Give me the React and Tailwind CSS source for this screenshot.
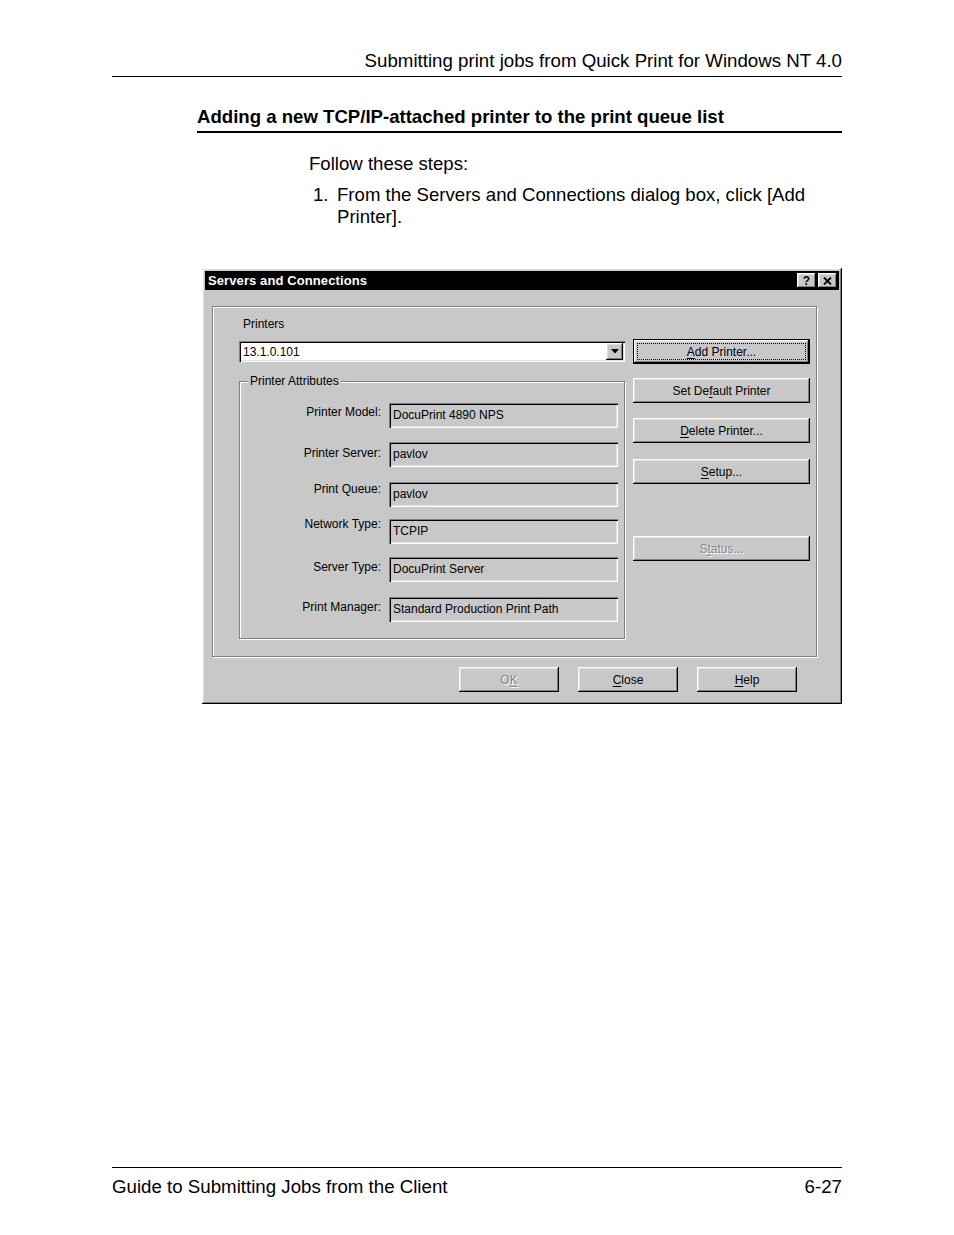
const raised =
  "shadow-[inset_-1px_-1px_0_#000,inset_1px_1px_0_#fff,inset_-2px_-2px_0_#808080,inset_2px_2px_0_#dfdfdf]";
const sunken =
  "shadow-[inset_1px_1px_0_#808080,inset_2px_2px_0_#000,inset_-1px_-1px_0_#fff,inset_-2px_-2px_0_#dfdfdf]";
const etched = "border border-[#808080] shadow-[1px_1px_0_#fff,inset_1px_1px_0_#fff]";
const disabledText = "text-[#868686] [text-shadow:1px_1px_0_#fff]";

const rows = [
  { label: "Printer Model:", value: "DocuPrint 4890 NPS", mt: "mt-[21px]", lt: "pt-[2px]" },
  { label: "Printer Server:", value: "pavlov", mt: "mt-[14px]", lt: "pt-[4px]" },
  { label: "Print Queue:", value: "pavlov", mt: "mt-[15px]", lt: "pt-0" },
  { label: "Network Type:", value: "TCPIP", mt: "mt-[12px]", lt: "-mt-[2px]" },
  { label: "Server Type:", value: "DocuPrint Server", mt: "mt-[13px]", lt: "pt-[3px]" },
  { label: "Print Manager:", value: "Standard Production Print Path", mt: "mt-[15px]", lt: "pt-[3px]" },
];

function WinButton({ children, className = "", disabled = false }) {
  return (
    <div
      className={`h-[25px] flex items-center justify-center bg-[#c8c8c8] ${raised} ${className} ${
        disabled ? disabledText : "text-black"
      }`}
    >
      {children}
    </div>
  );
}

function Key({ children }) {
  return <span className="underline underline-offset-[1.5px]">{children}</span>;
}

function Dialog() {
  return (
    <div className={`ml-[90px] mt-[40px] w-[640px] bg-[#c8c8c8] p-[3px] ${raised} text-[12px] leading-[14px] text-black`}>
      {/* title bar */}
      <div className="h-[19px] bg-black flex items-center justify-between pl-[3px] pr-[2px]">
        <span className="text-white font-bold text-[13px] tracking-[0.1px]">Servers and Connections</span>
        <div className="flex gap-[2px]">
          <div className={`w-[19px] h-[15px] bg-[#c8c8c8] ${raised} flex items-center justify-center font-bold text-[12px] leading-none`}>
            ?
          </div>
          <div className={`w-[19px] h-[15px] bg-[#c8c8c8] ${raised} flex items-center justify-center`}>
            <svg width="9" height="8" viewBox="0 0 9 8">
              <path d="M1 0.5 L8 7.5 M8 0.5 L1 7.5" stroke="#000" strokeWidth="1.8" />
            </svg>
          </div>
        </div>
      </div>

      <div className="pb-[9px]">
        {/* main panel */}
        <div className={`mt-[16px] ml-[7px] w-[605px] flex pl-[26px] pr-[6px] ${etched}`}>
          <div className="w-[386px] pt-[10px] pb-[17px]">
            <div className="ml-[4px]">Printers</div>
            <div className={`mt-[10px] h-[21px] bg-white ${sunken} flex items-center justify-between pl-[4px] pr-[2px]`}>
              <span>13.1.0.101</span>
              <div className={`w-[17px] h-[17px] bg-[#c8c8c8] ${raised} flex items-center justify-center`}>
                <svg width="8" height="5" viewBox="0 0 8 5">
                  <path d="M0 0 H8 L4 4.5 Z" fill="#000" />
                </svg>
              </div>
            </div>

            <div className={`relative mt-[19px] h-[258px] pr-[6px] ${etched}`}>
              <span className="absolute -top-[8px] left-[8px] px-[2px] bg-[#c8c8c8]">Printer Attributes</span>
              {rows.map((r) => (
                <div key={r.label} className={`flex items-start gap-[8px] ${r.mt}`}>
                  <div className={`w-[141px] text-right ${r.lt}`}>{r.label}</div>
                  <div className={`w-[229px] h-[25px] ${sunken} flex items-center pl-[4px] pb-[2px]`}>
                    {r.value}
                  </div>
                </div>
              ))}
            </div>
          </div>

          <div className="ml-[8px] w-[177px] pt-[32px] flex flex-col">
            <div className="h-[25px] border border-black flex">
              <div className={`flex-1 flex ${raised} p-[3px]`}>
                <div className="flex-1 border border-dotted border-black flex items-center justify-center">
                  <span>
                    <Key>A</Key>dd Printer...
                  </span>
                </div>
              </div>
            </div>
            <WinButton className="mt-[14px]">
              <span>
                Set De<Key>f</Key>ault Printer
              </span>
            </WinButton>
            <WinButton className="mt-[15px]">
              <span>
                <Key>D</Key>elete Printer...
              </span>
            </WinButton>
            <WinButton className="mt-[16px]">
              <span>
                <Key>S</Key>etup...
              </span>
            </WinButton>
            <WinButton className="mt-[52px]" disabled>
              <span>
                S<Key>t</Key>atus...
              </span>
            </WinButton>
          </div>
        </div>

        {/* bottom buttons */}
        <div className="mt-[10px] flex justify-end gap-[19px] pr-[42px]">
          <WinButton className="w-[100px]" disabled>
            <span>
              O<Key>K</Key>
            </span>
          </WinButton>
          <WinButton className="w-[100px]">
            <span>
              <Key>C</Key>lose
            </span>
          </WinButton>
          <WinButton className="w-[100px]">
            <span>
              <Key>H</Key>elp
            </span>
          </WinButton>
        </div>
      </div>
    </div>
  );
}

export default function App() {
  return (
    <div className="w-[954px] h-[1235px] bg-white text-black flex flex-col px-[112px] font-['Liberation_Sans',Arial,sans-serif]">
      <div className="pt-[50px] pb-[4px] border-b border-black text-right text-[18.7px] leading-[22px]">
        Submitting print jobs from Quick Print for Windows NT 4.0
      </div>

      <div className="ml-[85px] mt-[29px] pb-[3px] border-b-2 border-black font-bold text-[18.6px] leading-[22px]">
        Adding a new TCP/IP-attached printer to the print queue list
      </div>

      <div className="ml-[197px] mt-[20px] text-[18.6px] leading-[22px]">Follow these steps:</div>
      <div className="ml-[201px] mt-[9px] flex text-[18.6px] leading-[22px]">
        <span className="w-[24px] shrink-0">1.</span>
        <span>
          From the Servers and Connections dialog box, click [Add
          <br />
          Printer].
        </span>
      </div>

      <Dialog />

      <div className="mt-auto pt-[8px] pb-[37px] border-t border-black flex justify-between text-[18.7px] leading-[22px]">
        <span>Guide to Submitting Jobs from the Client</span>
        <span>6-27</span>
      </div>
    </div>
  );
}
